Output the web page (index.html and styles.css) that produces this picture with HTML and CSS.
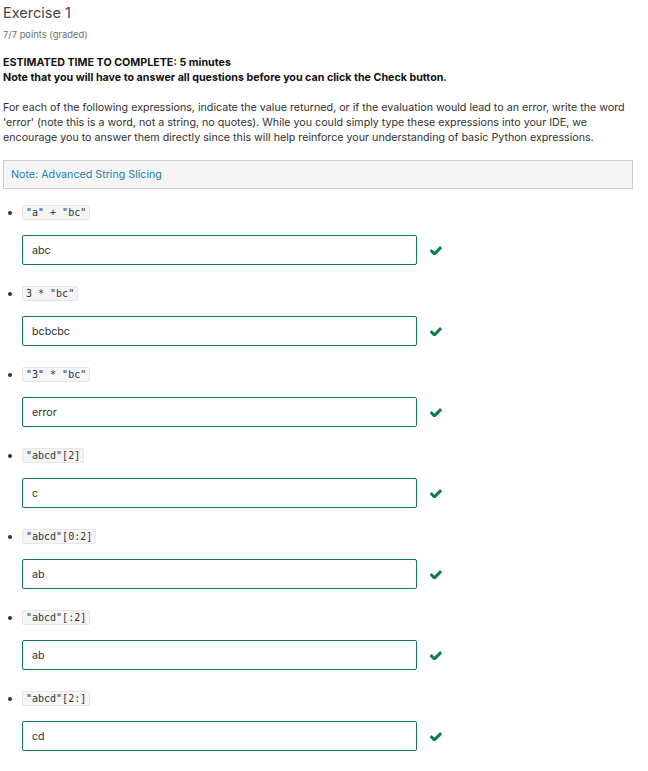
FILE: index.html
```html
<!DOCTYPE html>
<html>
<head>
<meta charset="utf-8">
<link rel="stylesheet" href="styles.css">
</head>
<body>
<div class="page">
  <h2 class="title">Exercise 1</h2>
  <div class="points">7/7 points (graded)</div>
  <p class="estimate">ESTIMATED TIME TO COMPLETE: 5 minutes<br>Note that you will have to answer all questions before you can click the Check button.</p>
  <p class="intro">For each of the following expressions, indicate the value returned, or if the evaluation would lead to an error, write the word 'error' (note this is a word, not a string, no quotes). While you could simply type these expressions into your IDE, we encourage you to answer them directly since this will help reinforce your understanding of basic Python expressions.</p>
  <div class="note">Note: Advanced String Slicing</div>
  <ul class="questions">
    <li class="q">
      <div class="expr"><code>"a" + "bc"</code></div>
      <div class="answer"><input class="field" type="text" value="abc" readonly><svg class="check" viewBox="150 290 1530 1140"><path d="M1671 566q0 40-28 68l-724 724-136 136q-28 28-68 28t-68-28l-136-136-362-362q-28-28-28-68t28-68l136-136q28-28 68-28t68 28l294 295 656-657q28-28 68-28t68 28l136 136q28 28 28 68z"/></svg></div>
    </li>
    <li class="q">
      <div class="expr"><code>3 * "bc"</code></div>
      <div class="answer"><input class="field" type="text" value="bcbcbc" readonly><svg class="check" viewBox="150 290 1530 1140"><path d="M1671 566q0 40-28 68l-724 724-136 136q-28 28-68 28t-68-28l-136-136-362-362q-28-28-28-68t28-68l136-136q28-28 68-28t68 28l294 295 656-657q28-28 68-28t68 28l136 136q28 28 28 68z"/></svg></div>
    </li>
    <li class="q">
      <div class="expr"><code>"3" * "bc"</code></div>
      <div class="answer"><input class="field" type="text" value="error" readonly><svg class="check" viewBox="150 290 1530 1140"><path d="M1671 566q0 40-28 68l-724 724-136 136q-28 28-68 28t-68-28l-136-136-362-362q-28-28-28-68t28-68l136-136q28-28 68-28t68 28l294 295 656-657q28-28 68-28t68 28l136 136q28 28 28 68z"/></svg></div>
    </li>
    <li class="q">
      <div class="expr"><code>"abcd"[2]</code></div>
      <div class="answer"><input class="field" type="text" value="c" readonly><svg class="check" viewBox="150 290 1530 1140"><path d="M1671 566q0 40-28 68l-724 724-136 136q-28 28-68 28t-68-28l-136-136-362-362q-28-28-28-68t28-68l136-136q28-28 68-28t68 28l294 295 656-657q28-28 68-28t68 28l136 136q28 28 28 68z"/></svg></div>
    </li>
    <li class="q">
      <div class="expr"><code>"abcd"[0:2]</code></div>
      <div class="answer"><input class="field" type="text" value="ab" readonly><svg class="check" viewBox="150 290 1530 1140"><path d="M1671 566q0 40-28 68l-724 724-136 136q-28 28-68 28t-68-28l-136-136-362-362q-28-28-28-68t28-68l136-136q28-28 68-28t68 28l294 295 656-657q28-28 68-28t68 28l136 136q28 28 28 68z"/></svg></div>
    </li>
    <li class="q">
      <div class="expr"><code>"abcd"[:2]</code></div>
      <div class="answer"><input class="field" type="text" value="ab" readonly><svg class="check" viewBox="150 290 1530 1140"><path d="M1671 566q0 40-28 68l-724 724-136 136q-28 28-68 28t-68-28l-136-136-362-362q-28-28-28-68t28-68l136-136q28-28 68-28t68 28l294 295 656-657q28-28 68-28t68 28l136 136q28 28 28 68z"/></svg></div>
    </li>
    <li class="q">
      <div class="expr"><code>"abcd"[2:]</code></div>
      <div class="answer"><input class="field" type="text" value="cd" readonly><svg class="check" viewBox="150 290 1530 1140"><path d="M1671 566q0 40-28 68l-724 724-136 136q-28 28-68 28t-68-28l-136-136-362-362q-28-28-28-68t28-68l136-136q28-28 68-28t68 28l294 295 656-657q28-28 68-28t68 28l136 136q28 28 28 68z"/></svg></div>
    </li>
  </ul>
</div>
</body>
</html>
```

FILE: styles.css
```css
html, body {
  margin: 0;
  padding: 0;
  background: #ffffff;
}
body {
  font-family: Inter, "Noto Sans", sans-serif;
  color: #313131;
  font-size: 11px;
}
.page {
  padding: 3px 15px 0 3px;
}
.title {
  margin: 0;
  font-size: 14.5px;
  line-height: 20px;
  font-weight: 400;
  color: #454545;
}
.points {
  margin-top: 5px;
  font-size: 9.4px;
  line-height: 14px;
  color: #707070;
}
.estimate {
  margin: 13px 0 0;
  font-weight: 700;
  font-size: 10.7px;
  line-height: 15px;
  color: #111;
}
.intro {
  margin: 15px 0 0;
  font-size: 10.7px;
  line-height: 15px;
  color: #313131;
}
.note {
  margin-top: 15px;
  height: 27px;
  line-height: 27px;
  padding: 0 7px;
  background: #f5f5f5;
  border: 1px solid #cccccc;
  color: #1b7fae;
  font-size: 10.7px;
}
.questions {
  margin: 15px 0 0;
  padding: 0 0 0 19px;
}
.q {
  margin-bottom: 20px;
}
.expr {
  height: 16px;
  line-height: 16px;
}
code {
  font-family: "DejaVu Sans Mono", monospace;
  font-size: 10px;
  background: #f5f5f5;
  border: 1px solid #e6e6e6;
  border-radius: 2px;
  padding: 1px 3px;
  color: #333;
}
.answer {
  margin-top: 15px;
  display: flex;
  align-items: center;
}
.field {
  box-sizing: border-box;
  width: 395px;
  height: 30px;
  margin: 0;
  padding: 0 9px;
  border: 1px solid #0e7d4c;
  border-radius: 2px;
  font-family: Inter, "Noto Sans", sans-serif;
  font-size: 10.7px;
  color: #313131;
  background: #fff;
  outline: none;
}
.check {
  width: 12px;
  height: 9px;
  margin-left: 13px;
  fill: #0e7d4c;
}
```
